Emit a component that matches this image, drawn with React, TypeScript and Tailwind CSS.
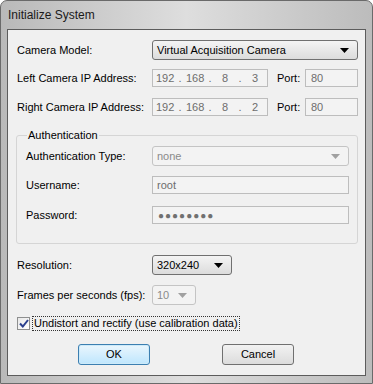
import React from "react"

const font = { fontFamily: '"Liberation Sans", Arial, sans-serif' }

function Arrow({ disabled }: { disabled?: boolean }) {
  return (
    <svg width="9" height="5" viewBox="0 0 9 5" className="shrink-0">
      <path d="M0 0 H9 L4.5 5 Z" fill={disabled ? "#a0a0a0" : "#000"} />
    </svg>
  )
}

function Select({ value, width, disabled }: { value: string; width: string; disabled?: boolean }) {
  return (
    <div
      className={`${width} h-[20px] flex items-center justify-between pl-[4px] pr-[8px] rounded-[3px] border ${
        disabled
          ? "border-[#c4c4c4] bg-[#f3f3f3] text-[#8a8a8a]"
          : "border-[#707070] bg-gradient-to-b from-[#f4f4f4] to-[#dcdcdc] text-black"
      }`}
    >
      <span>{value}</span>
      <Arrow disabled={disabled} />
    </div>
  )
}

function Field({ value, width, pad = "pl-[4px]" }: { value: React.ReactNode; width: string; pad?: string }) {
  return (
    <div
      className={`${width} h-[18px] flex items-center ${pad} border border-[#bdbdbd] bg-[#f3f3f3] text-[#6d6d6d]`}
    >
      {value}
    </div>
  )
}

function IpField({ parts }: { parts: string[] }) {
  return (
    <div className="w-[116px] h-[18px] flex items-center pl-[3px] border border-[#bdbdbd] bg-[#f3f3f3] text-[#6d6d6d]">
      {parts.map((p, i) => (
        <React.Fragment key={i}>
          <span className="w-[18px] text-center">{p}</span>
          {i < parts.length - 1 && <span className="w-[12px] text-center">.</span>}
        </React.Fragment>
      ))}
    </div>
  )
}

function IpRow({ label, parts, className }: { label: string; parts: string[]; className: string }) {
  return (
    <div className={`flex items-center ${className}`}>
      <span className="w-[135px]">{label}</span>
      <IpField parts={parts} />
      <span className="ml-[9px] w-[28px]">Port:</span>
      <Field value="80" width="w-[53px]" pad="pl-[5px]" />
    </div>
  )
}

function Button({ label, primary }: { label: string; primary?: boolean }) {
  return (
    <div
      className={`w-[72px] h-[21px] flex items-center justify-center rounded-[3px] border ${
        primary
          ? "border-[#3c7fb1] bg-gradient-to-b from-[#eaf6fd] to-[#bee6fd] shadow-[inset_0_0_0_1px_#cdeaf9]"
          : "border-[#707070] bg-gradient-to-b from-[#f2f2f2] to-[#dcdcdc]"
      }`}
    >
      {label}
    </div>
  )
}

export default function App() {
  return (
    <div
      className="w-[373px] h-[384px] flex flex-col rounded-t-[7px] border border-[#6a6a6a] bg-gradient-to-r from-[#b9b9b9] via-[#dedede] to-[#bcbcbc] text-[11px] text-black"
      style={font}
    >
      {/* Title bar */}
      <div className="h-[28px] flex items-center pl-[7px] text-[12px] text-[#1a1a1a]">Initialize System</div>

      {/* Client area */}
      <div className="mx-[6px] h-[347px] border border-[#5c5c5c] bg-[#f0f0f0] flex flex-col pl-[9px] pt-[10px]">
        <div className="flex items-center h-[20px]">
          <span className="w-[135px]">Camera Model:</span>
          <Select value="Virtual Acquisition Camera" width="w-[206px]" />
        </div>
        <IpRow label="Left Camera IP Address:" parts={["192", "168", "8", "3"]} className="mt-[9px]" />
        <IpRow label="Right Camera IP Address:" parts={["192", "168", "8", "2"]} className="mt-[11px]" />

        {/* Authentication group */}
        <div className="mt-[19px] -ml-[1px] w-[342px] h-[109px] border border-[#d5d5d5] rounded-[3px] flex flex-col pl-[9px]">
          <span className="-mt-[7px] ml-[1px] px-[1px] w-fit bg-[#f0f0f0] leading-[13px]">Authentication</span>
          <div className="flex items-center h-[20px] mt-[4px]">
            <span className="w-[126px]">Authentication Type:</span>
            <Select value="none" width="w-[197px]" disabled />
          </div>
          <div className="flex items-center mt-[10px]">
            <span className="w-[126px]">Username:</span>
            <Field value="root" width="w-[197px]" />
          </div>
          <div className="flex items-center mt-[12px]">
            <span className="w-[126px]">Password:</span>
            <Field
              value={<span className="tracking-[1px] text-[#707070] text-[10px]">●●●●●●●●</span>}
              width="w-[197px]"
              pad="pl-[5px]"
            />
          </div>
        </div>

        <div className="flex items-center h-[20px] mt-[11px]">
          <span className="w-[135px]">Resolution:</span>
          <Select value="320x240" width="w-[80px]" />
        </div>
        <div className="flex items-center h-[20px] mt-[10px]">
          <span className="w-[135px]">Frames per seconds (fps):</span>
          <Select value="10" width="w-[44px]" disabled />
        </div>

        <div className="flex items-center h-[13px] mt-[12px]">
          <div className="w-[13px] h-[13px] border border-[#8e8f8f] bg-gradient-to-br from-[#e8e8e8] to-white flex items-center justify-center">
            <svg width="10" height="9" viewBox="0 0 10 9">
              <path d="M1 4.5 L3.8 7.5 L9 1" fill="none" stroke="#2a3f8e" strokeWidth="2" />
            </svg>
          </div>
          <span className="ml-[3px] px-[1px] outline outline-1 outline-dotted outline-[#333] leading-[13px]">
            Undistort and rectify (use calibration data)
          </span>
        </div>

        <div className="flex mt-[14px] pl-[61px] gap-[72px]">
          <Button label="OK" primary />
          <Button label="Cancel" />
        </div>
      </div>
    </div>
  )
}
